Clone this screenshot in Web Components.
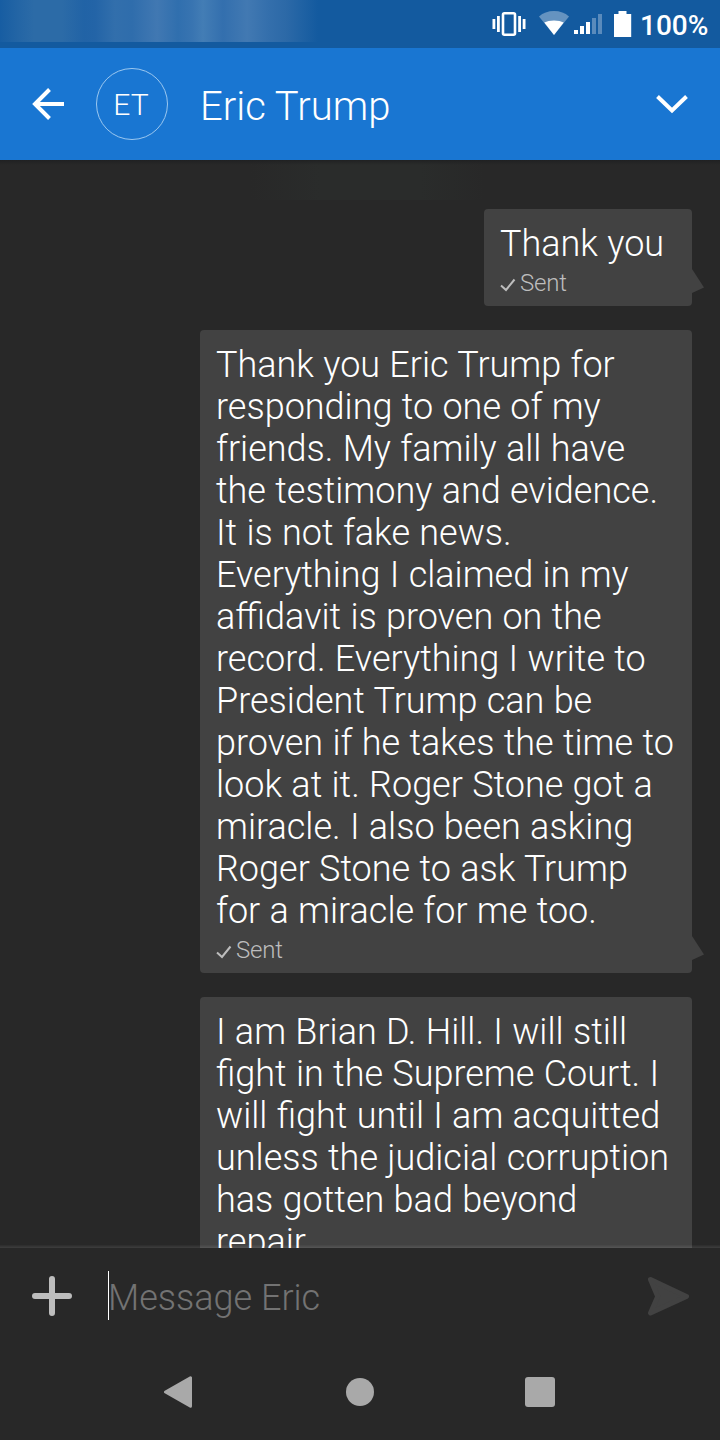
<!DOCTYPE html>
<html lang="en">
<head>
<meta charset="utf-8">
<title>Messages</title>
<style>
  body {
    margin: 0;
    background: #282828;
    font-family: Roboto, "Liberation Sans", sans-serif;
    font-weight: 300;
  }
</style>
</head>
<body>
<chat-screen>
  <status-bar slot="top" level="100%"></status-bar>
  <chat-header slot="top" initials="ET">Eric Trump</chat-header>

  <chat-bubble status="Sent">Thank you</chat-bubble>
  <chat-bubble status="Sent" wide>Thank you Eric Trump for<br>responding to one of my<br>friends. My family all have<br>the testimony and evidence.<br>It is not fake news.<br>Everything I claimed in my<br>affidavit is proven on the<br>record. Everything I write to<br>President Trump can be<br>proven if he takes the time to<br>look at it. Roger Stone got a<br>miracle. I also been asking<br>Roger Stone to ask Trump<br>for a miracle for me too.</chat-bubble>
  <chat-bubble wide>I am Brian D. Hill. I will still<br>fight in the Supreme Court. I<br>will fight until I am acquitted<br>unless the judicial corruption<br>has gotten bad beyond<br>repair</chat-bubble>

  <message-composer slot="bottom" placeholder="Message Eric"></message-composer>
  <nav-bar slot="bottom"></nav-bar>
</chat-screen>

<script>
// Page frame: fixed bars with the message list between them
class ChatScreen extends HTMLElement {
  constructor() {
    super();
    this.attachShadow({ mode: 'open' });
  }

  connectedCallback() {
    this.shadowRoot.innerHTML = `
      <style>
        :host {
          display: flex;
          flex-direction: column;
          width: 720px;
          height: 1440px;
          overflow: hidden;
          background: #282828;
        }
        .messages {
          flex: 1;
          min-height: 0;
          overflow: hidden;
          box-sizing: border-box;
          display: flex;
          flex-direction: column;
          align-items: flex-end;
          gap: 24px;
          padding: 49px 28px 0 0;
          position: relative;
          background:
            linear-gradient(#202122, rgba(32,33,34,0)) 0 0 / 100% 5px no-repeat,
            linear-gradient(90deg, rgba(42,44,43,0) 250px, #2a2c2b 320px, #2a2c2b 420px, rgba(42,44,43,0) 485px) 0 0 / 100% 40px no-repeat;
        }
        /* soft edge over the clipped messages */
        .messages::after {
          content: "";
          position: absolute;
          left: 0;
          right: 0;
          bottom: 0;
          height: 3px;
          background: linear-gradient(rgba(255,255,255,.02), rgba(255,255,255,.1));
        }
      </style>
      <slot name="top"></slot>
      <div class="messages"><slot></slot></div>
      <slot name="bottom"></slot>
    `;
  }
}

// Android status bar
class StatusBar extends HTMLElement {
  constructor() {
    super();
    this.attachShadow({ mode: 'open' });
  }

  connectedCallback() {
    const level = this.getAttribute('level');

    this.shadowRoot.innerHTML = `
      <style>
        :host {
          display: flex;
          justify-content: space-between;
          flex: none;
          height: 48px;
          background: #135a9f;
          color: #fff;
        }
        .smear {
          width: 320px;
          height: 42px;
          background: linear-gradient(90deg,
            #175da2 0, #2365a5 18px, #2c6ba7 34px, #2c6ba7 62px, #2163a6 84px,
            #2364a7 95px, #326fac 115px, #2f6dac 132px, #4178b2 157px, #306fae 178px,
            #3874b1 192px, #437db5 203px, #336fae 223px, #4279b2 247px, #346fac 268px,
            #2c69a7 286px, #1e61a3 304px, #135a9f 318px);
        }
        .icons {
          display: flex;
          align-items: center;
          padding-right: 12px;
        }
        .level {
          width: 68px;
          margin-left: 8px;
          padding-top: 3px;
          font-size: 28px;
          font-weight: 500;
          line-height: 34px;
          white-space: nowrap;
        }
      </style>
      <div class="smear"></div>
      <div class="icons">
        <svg width="142" height="48" viewBox="490 0 142 48" fill="#fff">
          <rect x="503" y="13.3" width="12" height="21.4" rx="1.4" fill="none" stroke="#fff" stroke-width="2.6"/>
          <path d="M492.500 19h2.800v10h-2.800zM497 16h2.800v16h-2.800zM518.200 16h2.800v16h-2.800zM522.700 19h2.800v10h-2.800z"/>
          <path d="M554 35L539 16.500Q545 11 554 11T569 16.500Z" opacity=".35"/>
          <path d="M554 35L544.300 22.500Q548 20.500 554 20.500T563.700 22.500Z"/>
          <path d="M574 30h4v4h-4zM580 26h4v8h-4zM586 22h4v12h-4z"/>
          <path d="M592 18h4v16h-4zM598 14h4v20h-4z" opacity=".3"/>
          <path d="M614 14h4.500v-3h8v3h4.700v23H614z"/>
        </svg>
        <span class="level">${level}</span>
      </div>
    `;
  }
}

// Conversation header
class ChatHeader extends HTMLElement {
  constructor() {
    super();
    this.attachShadow({ mode: 'open' });
  }

  connectedCallback() {
    const initials = this.getAttribute('initials');

    this.shadowRoot.innerHTML = `
      <style>
        :host {
          display: flex;
          align-items: center;
          flex: none;
          box-sizing: border-box;
          height: 112px;
          padding: 0 32px;
          background: #1976d2;
          color: #fff;
        }
        .avatar {
          box-sizing: border-box;
          width: 72px;
          height: 72px;
          margin-left: 32px;
          padding-right: 2px;
          border: 1px solid #9cc8f0;
          border-radius: 50%;
          font-size: 30px;
          line-height: 71px;
          text-align: center;
        }
        .name {
          flex: 1;
          margin-left: 32px;
          padding-top: 6px;
          font-size: 40px;
          line-height: 48px;
        }
      </style>
      <svg width="32" height="32" viewBox="0 0 32 32" fill="none" stroke="#fff" stroke-width="4">
        <path d="M32 16H3M17.500 1.500L3 16l14.500 14.500"/>
      </svg>
      <div class="avatar">${initials}</div>
      <div class="name"><slot></slot></div>
      <svg width="32" height="20" viewBox="0 0 32 20" fill="none" stroke="#fff" stroke-width="4">
        <path d="M1.500 2.500L16 16.500l14.500-14"/>
      </svg>
    `;
  }
}

// Outgoing message, with its delivery status when there is one
class ChatBubble extends HTMLElement {
  constructor() {
    super();
    this.attachShadow({ mode: 'open' });
  }

  connectedCallback() {
    const status = this.getAttribute('status');

    this.shadowRoot.innerHTML = `
      <style>
        :host {
          display: block;
          position: relative;
          flex: none;
          box-sizing: border-box;
          width: 208px;
          padding: 14px 0 9px 16px;
          border-radius: 4px;
          background: #424242;
          color: #fff;
        }
        :host([wide]) {
          width: 492px;
        }
        .text {
          font-size: 36px;
          line-height: 42px;
          word-spacing: 0.5px;
          white-space: nowrap;
        }
        .status {
          display: flex;
          align-items: center;
          gap: 4px;
          height: 28px;
          padding-top: 4px;
          font-size: 24px;
          line-height: 28px;
          letter-spacing: -0.2px;
          color: #bdbdbd;
        }
        .status svg {
          margin-top: 3px;
        }
        .tail {
          position: absolute;
          right: -12px;
          bottom: 13px;
        }
      </style>
      <div class="text"><slot></slot></div>
      ${status ? `
        <div class="status">
          <svg width="16" height="14" viewBox="0 0 16 14" fill="none" stroke="#bdbdbd" stroke-width="2">
            <path d="M1 7.500l5 4.500L14.500 1.500"/>
          </svg>
          <span>${status}</span>
        </div>
        <svg class="tail" width="12" height="24" viewBox="0 0 12 24" fill="#424242">
          <path d="M0 0l12 18.500L0 24z"/>
        </svg>
      ` : ''}
    `;
  }
}

// Message input row
class MessageComposer extends HTMLElement {
  constructor() {
    super();
    this.attachShadow({ mode: 'open' });
  }

  connectedCallback() {
    const placeholder = this.getAttribute('placeholder');

    this.shadowRoot.innerHTML = `
      <style>
        :host {
          display: flex;
          align-items: center;
          flex: none;
          box-sizing: border-box;
          height: 96px;
          padding: 0 31px 0 32px;
          background: #282828;
        }
        .field {
          flex: 1;
          height: 49px;
          margin-left: 36px;
          margin-top: -1px;
          border-left: 1px solid #fff;
          font-size: 36px;
          line-height: 54px;
          text-indent: -1px;
          color: #737373;
        }
      </style>
      <svg width="40" height="40" viewBox="0 0 40 40" stroke="#bdbdbd" stroke-width="6" stroke-linecap="round">
        <path d="M20 3v34M3 20h34"/>
      </svg>
      <div class="field">${placeholder}</div>
      <svg width="41" height="40" viewBox="0 0 41 40" fill="#424242" stroke="#424242" stroke-width="5" stroke-linejoin="round">
        <path d="M2.500 3.500L38.500 20.500 2.500 37l7.200-16.500z"/>
      </svg>
    `;
  }
}

// System navigation buttons
class NavBar extends HTMLElement {
  constructor() {
    super();
    this.attachShadow({ mode: 'open' });
  }

  connectedCallback() {
    this.shadowRoot.innerHTML = `
      <style>
        :host {
          display: flex;
          align-items: center;
          justify-content: center;
          gap: 148px;
          flex: none;
          height: 96px;
          background: #282828;
        }
      </style>
      <svg width="32" height="32" viewBox="0 0 32 32" fill="#a9a9a9" stroke="#a9a9a9" stroke-width="3" stroke-linejoin="round">
        <path d="M26.500 1.800v28.400L1.500 16z"/>
      </svg>
      <svg width="32" height="32" viewBox="0 0 32 32" fill="#a9a9a9"><circle cx="16" cy="16" r="14"/></svg>
      <svg width="32" height="32" viewBox="0 0 32 32" fill="#a9a9a9"><rect x="1" y="1" width="30" height="30" rx="3"/></svg>
    `;
  }
}

customElements.define('chat-screen', ChatScreen);
customElements.define('status-bar', StatusBar);
customElements.define('chat-header', ChatHeader);
customElements.define('chat-bubble', ChatBubble);
customElements.define('message-composer', MessageComposer);
customElements.define('nav-bar', NavBar);
</script>
</body>
</html>
